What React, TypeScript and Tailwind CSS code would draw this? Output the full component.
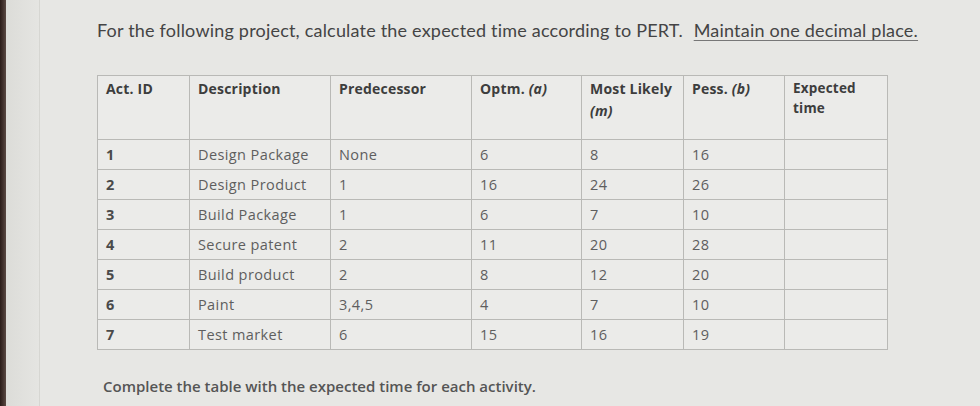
const columns = [
  { key: 'id', label: 'Act. ID', width: 'w-[92px]' },
  { key: 'desc', label: 'Description', width: 'w-[141px]' },
  { key: 'pred', label: 'Predecessor', width: 'w-[141px]' },
  { key: 'a', label: 'Optm.', italic: '(a)', width: 'w-[110px]' },
  { key: 'm', label: 'Most Likely', italic: '(m)', width: 'w-[102px]' },
  { key: 'b', label: 'Pess.', italic: '(b)', width: 'w-[101px]' },
  { key: 'te', label: 'Expected time', width: 'w-[103px]' },
]

const rows = [
  ['1', 'Design Package', 'None', '6', '8', '16'],
  ['2', 'Design Product', '1', '16', '24', '26'],
  ['3', 'Build Package', '1', '6', '7', '10'],
  ['4', 'Secure patent', '2', '11', '20', '28'],
  ['5', 'Build product', '2', '8', '12', '20'],
  ['6', 'Paint', '3,4,5', '4', '7', '10'],
  ['7', 'Test market', '6', '15', '16', '19'],
]

export default function App() {
  return (
    <div
      className="w-[980px] h-[406px] flex overflow-hidden bg-[#e7e7e4]"
      style={{ fontFamily: '"Open Sans", Lato, sans-serif' }}
    >
      {/* dark bezel edge of the photo */}
      <div className="w-[6px] shrink-0 bg-gradient-to-r from-[#2a1c18] to-[#5b4a44]" />
      <div className="w-[34px] shrink-0 border-r border-[#d6d6d2] bg-gradient-to-r from-[#dcdcd8] to-[#e5e5e2]" />

      <div className="flex-1 pl-[57px] pt-[18px]">
        <p
          className="text-[18px] leading-[24px] text-[#444] tracking-[0.2px] whitespace-nowrap"
          style={{ fontFamily: 'Lato, sans-serif' }}
        >
          For the following project, calculate the expected time according to PERT.{' '}
          <span className="ml-[6px] underline underline-offset-[3px] decoration-[#777]">
            Maintain one decimal place.
          </span>
        </p>

        <table className="mt-[33px] border-collapse table-fixed bg-[#ebebe9]">
          <thead>
            <tr className="h-[64px]">
              {columns.map((c) => (
                <th
                  key={c.key}
                  className={`${c.width} border-[1.5px] border-[#b9b9b6] align-top text-left text-[14px] tracking-[0.2px] font-bold text-[#3d3d3d] px-[8px] pt-[2px] leading-[22px]`}
                >
                  {c.key === 'te' ? (
                    <span className="block w-[72px] text-[13.5px] leading-[20px]">Expected time</span>
                  ) : (
                    <>
                      {c.label}
                      {c.italic && (
                        <>
                          {' '}
                          <span className="italic">{c.italic}</span>
                        </>
                      )}
                    </>
                  )}
                </th>
              ))}
            </tr>
          </thead>
          <tbody>
            {rows.map((r) => (
              <tr key={r[0]} className="h-[30px] text-[14.5px] tracking-[0.4px]">
                <td className="border-[1.5px] border-[#b9b9b6] px-[8px] font-bold text-[#4a4a4a]">{r[0]}</td>
                {r.slice(1).map((v, i) => (
                  <td key={i} className="border-[1.5px] border-[#b9b9b6] px-[8px] text-[#5e5e5e]">
                    {v}
                  </td>
                ))}
                <td className="border-[1.5px] border-[#b9b9b6]" />
              </tr>
            ))}
          </tbody>
        </table>

        <p className="mt-[25px] ml-[6px] text-[15px] font-semibold text-[#555]">
          Complete the table with the expected time for each activity.
        </p>
      </div>
    </div>
  )
}
